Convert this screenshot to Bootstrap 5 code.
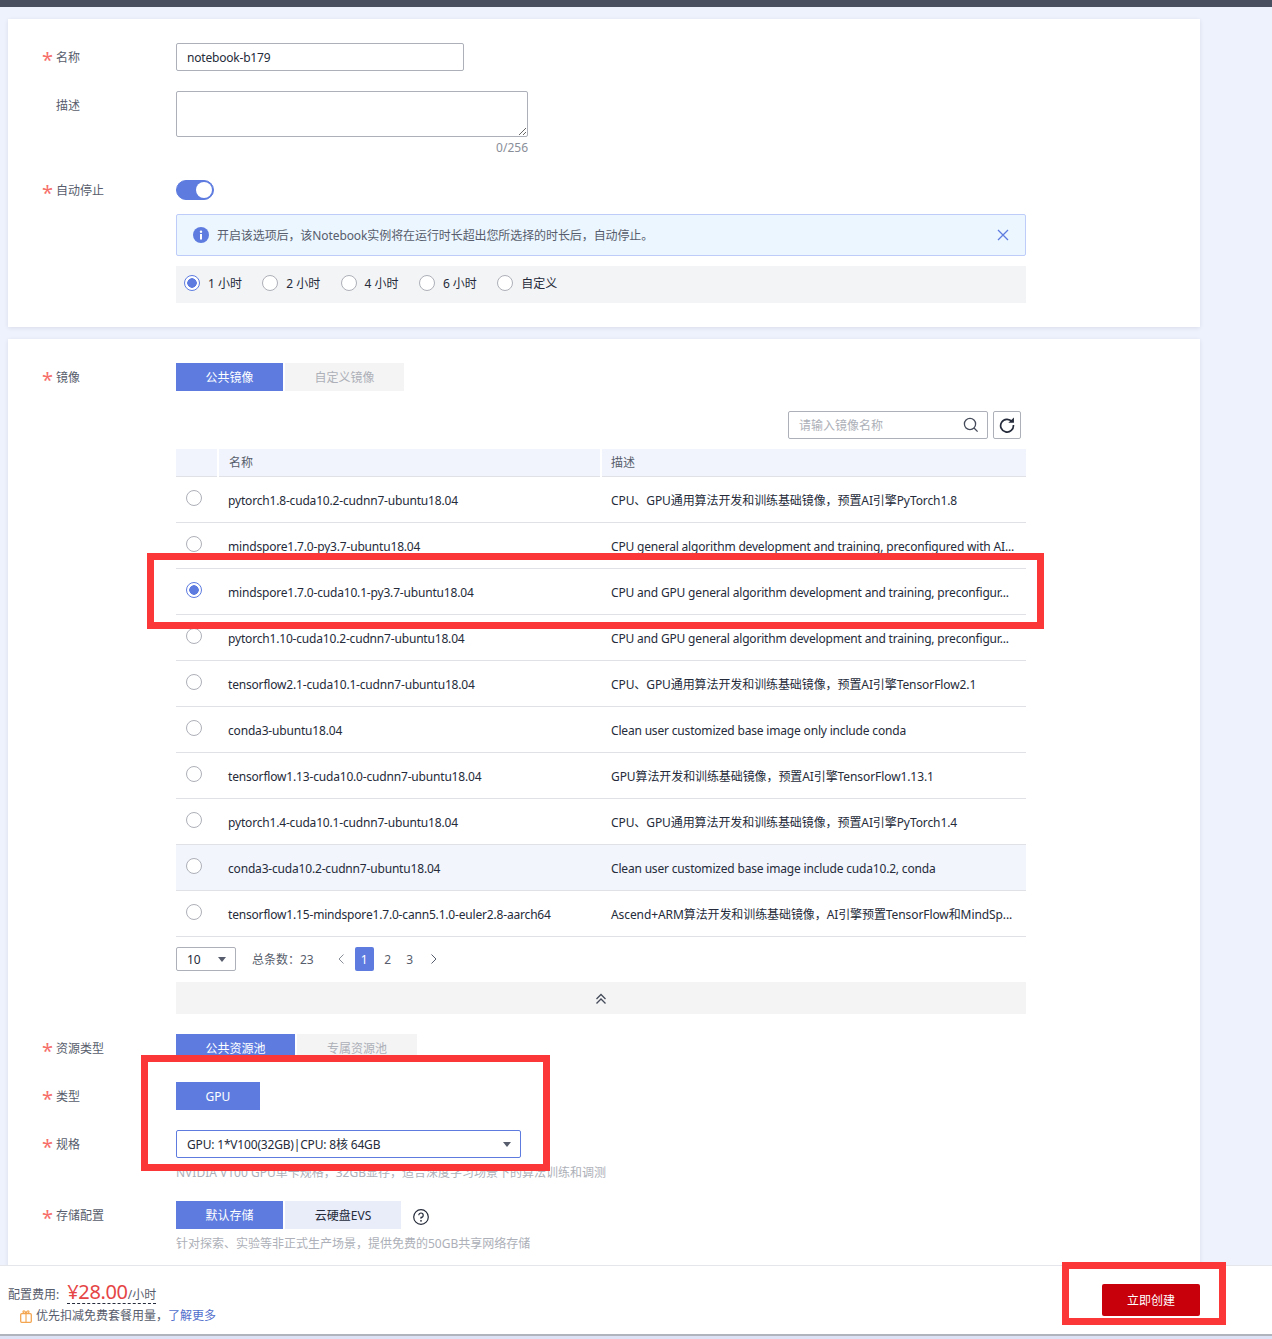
<!DOCTYPE html>
<html lang="zh">
<head>
<meta charset="utf-8">
<title>创建 Notebook</title>
<link href="https://cdn.jsdelivr.net/npm/bootstrap@5.3.0/dist/css/bootstrap.min.css" rel="stylesheet">
<style>
html,body{height:1339px;overflow:hidden}
body{background:#eef2fd;font-family:"Noto Sans","Noto Sans CJK SC",sans-serif;font-size:12px;color:#252b3a;line-height:18px}
.topstrip{height:7px;background:#494f5f}
.pane{background:#fff;margin-left:8px;width:1192px;box-shadow:0 1px 4px rgba(37,43,58,.1);border:0;border-radius:0}
.pane-a{margin-top:12px;height:308px;padding-top:24px}
.pane-b{margin-top:12px;height:1000px;padding-top:24px}
.frm-row{display:flex}
.frm-label{width:168px;height:28px;flex:none;padding-left:48px;padding-top:1px;line-height:28px;color:#575d6c;position:relative}
.frm-label.req::before{content:"*";position:absolute;left:34px;top:3px;color:#f66f6a;font-size:20px}
.frm-body{width:850px;flex:none}
.frm-input{width:288px;height:28px;padding:0 10px;font-size:12px;letter-spacing:-.2px;color:#252b3a;border:1px solid #adb0b8;border-radius:2px;font-family:inherit}
.frm-area{width:352px;height:46px;font-size:12px;border:1px solid #adb0b8;border-radius:2px;display:block}
.counter{width:352px;text-align:right;color:#8a8e99;line-height:20px;margin-top:1px}
.switch-row{margin-top:22px;margin-bottom:14px;line-height:20px}
.switch-row .frm-label{line-height:20px;height:20px}
.tog{width:38px;height:20px;border-radius:10px;background:#5e7ce0;border:1px solid #5e7ce0;display:flex;justify-content:flex-end;padding:1px}
.tog i{display:block;width:16px;height:16px;border-radius:50%;background:#fff}
.tip{height:42px;background:#ebf6ff;border:1px solid #beccfa;border-radius:2px;padding:0 16px;color:#575d6c;margin:0}
.tip .tip-x{margin-left:auto}
.nudge{padding-top:2px}
.lat{letter-spacing:-.18px}
.mix{letter-spacing:-.09px}
.radio-bar{height:37px;margin-top:10px;background:#f3f4f6;padding-left:8px;padding-bottom:2px;gap:19.3px}
.radio-bar .rd{margin-top:-2px}
.rd{display:block;width:16px;height:16px;border:1px solid #adb0b8;border-radius:50%;background:#fff;margin:0;flex:none}
.rd.on{border-color:#5e7ce0;background:radial-gradient(circle,#5e7ce0 0,#5e7ce0 4.5px,#fff 5px)}
.rd-item{display:flex;align-items:center;gap:8px;color:#252b3a;width:59px;white-space:nowrap}
.seg{height:28px;border-radius:0;border:0;font-size:12px;padding:1px 0 0;line-height:27px}
.seg-on,.seg-on:hover{background:#5e7ce0;color:#fff}
.seg-off,.seg-off:hover{background:#f4f4f4;color:#adb0b8}
.seg-soft,.seg-soft:hover{background:#e9edfa;color:#252b3a}
.w107{width:107px}.w119{width:119px}.w84{width:84px}.w116{width:116px}.w120{width:120px}
.ml2{margin-left:2px}
.search-row{height:28px;margin-top:20px;margin-bottom:10px;padding-right:5px;gap:5px}
.search-box{width:200px;height:28px;border:1px solid #adb0b8;border-radius:2px;padding:0 10px;color:#adb0b8}
.search-box svg{margin-left:auto;margin-right:-2px}
.refresh{width:28px;height:28px;border:1px solid #adb0b8;border-radius:2px;padding:0}
.img-table{table-layout:fixed;width:850px;margin:0;font-size:12px;--bs-table-bg:transparent}
.img-table th{height:27px;padding:0 10px;background:#f1f4fc;color:#575d6c;font-weight:400;border-bottom:1px solid #dfe1e6;border-left:2px solid #fff;line-height:27px;vertical-align:middle}
.img-table th:first-child{border-left:0}
.img-table th:last-child{padding-left:9px}
.img-table td{height:46px;padding:2px 10px 0;border-bottom:1px solid #dfe1e6;vertical-align:middle;color:#252b3a;white-space:nowrap;overflow:hidden}
.img-table td:first-child{overflow:visible}
.img-table td .rd{margin-top:-5px}
.img-table tr.hov td{background:#f2f5fc}
.pager-row{height:24px;margin-top:10px;margin-bottom:11px;color:#575d6c}
.page-size{width:60px;height:24px;border:1px solid #adb0b8;border-radius:2px;padding:0 9px 0 10px;color:#252b3a}
.caret{width:0;height:0;border-left:4px solid transparent;border-right:4px solid transparent;border-top:5px solid #575d6c;margin-left:auto}
.total{margin-left:16px;margin-right:13px}
.pg{margin:0;gap:0}
.pg .page-item .page-link{border:0;background:transparent;color:#575d6c;height:24px;padding:1px 0 0;line-height:24px;text-align:center;font-size:12px;width:22px;margin-left:0;border-radius:2px}
.pg .page-item.active .page-link{background:#5e7ce0;color:#fff;width:19px;margin-right:3px}
.pg .page-item.arr .page-link{display:flex;align-items:center;justify-content:center;width:28px;padding:0}
.pg .page-item.arr.nx .page-link{width:26px}
.collapse-bar{height:32px;background:#f4f4f4;padding-top:2px}
.row-gap{margin-top:20px}
.hint{color:#adb0b8;line-height:18px}
.hint-a{margin-top:6px}
.spec{width:345px;height:28px;border:1px solid #5e7ce0;border-radius:2px;padding:0 9px 0 10px;color:#252b3a}
.stor-row{margin-top:19px}
.help-ico{margin-left:12px;margin-top:4px}
.footbar{position:fixed;left:0;right:0;top:1265px;height:71px;background:#fff;border-top:1px solid #e4e6ec;border-bottom:2px solid #b0b4bd}
.foot-strip{position:fixed;left:0;right:0;top:1336px;height:3px;background:#dde3f4}
.fee-line{position:absolute;left:8px;top:13px;display:flex;align-items:baseline;color:#575d6c}
.fee-val{border-bottom:1px dashed #252b3a;margin-left:8px;line-height:26px;height:25px;color:#575d6c}
.fee-num{font-size:20px;letter-spacing:-.35px;color:#e54545}
.free-line{position:absolute;left:20px;top:41px;display:flex;align-items:center;color:#575d6c;gap:4px}
.free-line a{color:#526ecc;text-decoration:none}
.btn-make,.btn-make:hover{position:absolute;left:1102px;top:18px;width:98px;height:32px;background:#c7000b;color:#fff;border:0;border-radius:2px;font-size:12px;padding:2px 0 0}
.mark-box{position:fixed;border:7px solid #fc3737;pointer-events:none}
.mk1{left:147px;top:553px;width:897px;height:76px}
.mk2{left:141px;top:1055px;width:409px;height:116px}
.mk3{left:1062px;top:1262px;width:164px;height:63px}
</style>
</head>
<body>
<div class="topstrip"></div>

<div class="card pane pane-a">
  <div class="frm-row">
    <div class="frm-label req">名称</div>
    <div class="frm-body"><input class="frm-input" value="notebook-b179"></div>
  </div>
  <div class="frm-row row-gap">
    <div class="frm-label">描述</div>
    <div class="frm-body">
      <textarea class="frm-area"></textarea>
      <div class="counter">0/256</div>
    </div>
  </div>
  <div class="frm-row switch-row">
    <div class="frm-label req">自动停止</div>
    <div class="frm-body"><div class="tog"><i></i></div></div>
  </div>
  <div class="frm-row">
    <div class="frm-label"></div>
    <div class="frm-body">
      <div class="tip d-flex align-items-center gap-2">
        <svg width="16" height="16" viewBox="0 0 16 16"><circle cx="8" cy="8" r="8" fill="#5e7ce0"/><rect x="7" y="7" width="2" height="5.5" fill="#fff"/><circle cx="8" cy="4.7" r="1.2" fill="#fff"/></svg>
        <span class="nudge mix">开启该选项后，该Notebook实例将在运行时长超出您所选择的时长后，自动停止。</span>
        <svg class="tip-x" width="12" height="12" viewBox="0 0 12 12"><path d="M1 1l10 10M11 1L1 11" stroke="#5e7ce0" stroke-width="1.3" fill="none"/></svg>
      </div>
      <div class="radio-bar d-flex align-items-center">
        <label class="rd-item"><span class="rd on"></span>1 小时</label>
        <label class="rd-item"><span class="rd"></span>2 小时</label>
        <label class="rd-item"><span class="rd"></span>4 小时</label>
        <label class="rd-item"><span class="rd"></span>6 小时</label>
        <label class="rd-item"><span class="rd"></span>自定义</label>
      </div>
    </div>
  </div>
</div>

<div class="card pane pane-b">
  <div class="frm-row">
    <div class="frm-label req">镜像</div>
    <div class="frm-body">
      <div class="d-flex">
        <button class="btn seg seg-on w107">公共镜像</button>
        <button class="btn seg seg-off w119 ml2">自定义镜像</button>
      </div>
      <div class="search-row d-flex justify-content-end">
        <div class="search-box d-flex align-items-center"><span class="nudge">请输入镜像名称</span>
          <svg width="16" height="16" viewBox="0 0 16 16" fill="none"><circle cx="7" cy="7" r="5.6" stroke="#454b5a" stroke-width="1.3"/><path d="M11 11l3.6 3.6" stroke="#454b5a" stroke-width="1.3"/></svg>
        </div>
        <button class="btn refresh d-flex align-items-center justify-content-center">
          <svg width="16" height="16" viewBox="0 0 18 18" fill="none"><path d="M14.6 5.2A7.2 7.2 0 1 0 16.2 9" stroke="#252b3a" stroke-width="1.9"/><path d="M10.5 6.4h6.3V.5z" fill="#252b3a"/></svg>
        </button>
      </div>
      <table class="table img-table">
        <colgroup><col class="c1"><col class="c2"><col class="c3"></colgroup>
        <thead><tr><th style="width:42px"></th><th style="width:383px">名称</th><th>描述</th></tr></thead>
        <tbody>
          <tr><td><span class="rd"></span></td><td class="lat">pytorch1.8-cuda10.2-cudnn7-ubuntu18.04</td><td class="mix">CPU、GPU通用算法开发和训练基础镜像，预置AI引擎PyTorch1.8</td></tr>
          <tr><td><span class="rd"></span></td><td class="lat">mindspore1.7.0-py3.7-ubuntu18.04</td><td class="lat">CPU general algorithm development and training, preconfigured with AI...</td></tr>
          <tr><td><span class="rd on"></span></td><td class="lat">mindspore1.7.0-cuda10.1-py3.7-ubuntu18.04</td><td class="lat">CPU and GPU general algorithm development and training, preconfigur...</td></tr>
          <tr><td><span class="rd"></span></td><td class="lat">pytorch1.10-cuda10.2-cudnn7-ubuntu18.04</td><td class="lat">CPU and GPU general algorithm development and training, preconfigur...</td></tr>
          <tr><td><span class="rd"></span></td><td class="lat">tensorflow2.1-cuda10.1-cudnn7-ubuntu18.04</td><td class="mix">CPU、GPU通用算法开发和训练基础镜像，预置AI引擎TensorFlow2.1</td></tr>
          <tr><td><span class="rd"></span></td><td class="lat">conda3-ubuntu18.04</td><td class="lat">Clean user customized base image only include conda</td></tr>
          <tr><td><span class="rd"></span></td><td class="lat">tensorflow1.13-cuda10.0-cudnn7-ubuntu18.04</td><td class="mix">GPU算法开发和训练基础镜像，预置AI引擎TensorFlow1.13.1</td></tr>
          <tr><td><span class="rd"></span></td><td class="lat">pytorch1.4-cuda10.1-cudnn7-ubuntu18.04</td><td class="mix">CPU、GPU通用算法开发和训练基础镜像，预置AI引擎PyTorch1.4</td></tr>
          <tr class="hov"><td><span class="rd"></span></td><td class="lat">conda3-cuda10.2-cudnn7-ubuntu18.04</td><td class="lat">Clean user customized base image include cuda10.2, conda</td></tr>
          <tr><td><span class="rd"></span></td><td class="lat">tensorflow1.15-mindspore1.7.0-cann5.1.0-euler2.8-aarch64</td><td class="mix">Ascend+ARM算法开发和训练基础镜像，AI引擎预置TensorFlow和MindSp...</td></tr>
        </tbody>
      </table>
      <div class="pager-row d-flex align-items-center">
        <div class="page-size d-flex align-items-center"><span class="nudge">10</span><span class="caret"></span></div>
        <span class="total nudge">总条数：23</span>
        <ul class="pagination pg">
          <li class="page-item arr"><a class="page-link" href="#"><svg width="8" height="12" viewBox="0 0 8 12" fill="none"><path d="M6.5 1.5L2 6l4.5 4.5" stroke="#8a8e99"/></svg></a></li>
          <li class="page-item active"><a class="page-link" href="#">1</a></li>
          <li class="page-item"><a class="page-link" href="#">2</a></li>
          <li class="page-item"><a class="page-link" href="#">3</a></li>
          <li class="page-item arr nx"><a class="page-link" href="#"><svg width="8" height="12" viewBox="0 0 8 12" fill="none"><path d="M1.5 1.5L6 6l-4.5 4.5" stroke="#575d6c"/></svg></a></li>
        </ul>
      </div>
      <div class="collapse-bar d-flex align-items-center justify-content-center">
        <svg width="12" height="12" viewBox="0 0 12 12" fill="none"><path d="M1.5 6L6 1.5 10.5 6M1.5 10.5L6 6l4.5 4.5" stroke="#454b5a" stroke-width="1.3"/></svg>
      </div>
    </div>
  </div>
  <div class="frm-row row-gap">
    <div class="frm-label req">资源类型</div>
    <div class="frm-body d-flex">
      <button class="btn seg seg-on w119">公共资源池</button>
      <button class="btn seg seg-off w120 ml2">专属资源池</button>
    </div>
  </div>
  <div class="frm-row row-gap">
    <div class="frm-label req">类型</div>
    <div class="frm-body"><button class="btn seg seg-on w84">GPU</button></div>
  </div>
  <div class="frm-row row-gap">
    <div class="frm-label req">规格</div>
    <div class="frm-body">
      <div class="spec d-flex align-items-center"><span class="lat nudge">GPU: 1*V100(32GB)|CPU: 8核 64GB</span><span class="caret"></span></div>
      <div class="hint hint-a">NVIDIA V100 GPU单卡规格，32GB显存，适合深度学习场景下的算法训练和调测</div>
    </div>
  </div>
  <div class="frm-row stor-row">
    <div class="frm-label req">存储配置</div>
    <div class="frm-body">
      <div class="d-flex align-items-center">
        <button class="btn seg seg-on w107">默认存储</button>
        <button class="btn seg seg-soft w116 ml2">云硬盘EVS</button>
        <svg class="help-ico" width="16" height="16" viewBox="0 0 16 16" fill="none"><circle cx="8" cy="8" r="7.3" stroke="#252b3a" stroke-width="1.2"/><path d="M5.8 6.2A2.2 2.2 0 1 1 8 8.4v1.4" stroke="#252b3a" stroke-width="1.2"/><circle cx="8" cy="11.8" r=".9" fill="#252b3a"/></svg>
      </div>
      <div class="hint hint-a">针对探索、实验等非正式生产场景，提供免费的50GB共享网络存储</div>
    </div>
  </div>
</div>

<div class="footbar">
  <div class="fee-line"><span>配置费用:</span><span class="fee-val"><span class="fee-num">¥28.00</span>/小时</span></div>
  <div class="free-line">
    <svg width="12" height="13" viewBox="0 0 12 13" fill="none"><rect x=".7" y="3.7" width="10.6" height="8.6" rx="1" stroke="#f3a54f" stroke-width="1.3"/><path d="M6 3.5v9M6 3.5C4.5 3.5 2.8 2.8 3 1.5 3.3.3 5.5.8 6 3.5c.5-2.7 2.7-3.2 3-2 .2 1.3-1.5 2-3 2z" stroke="#f3a54f" stroke-width="1.1"/></svg>
    <span>优先扣减免费套餐用量，<a href="#">了解更多</a></span>
  </div>
  <button class="btn btn-make">立即创建</button>
</div>
<div class="foot-strip"></div>

<div class="mark-box mk1"></div>
<div class="mark-box mk2"></div>
<div class="mark-box mk3"></div>
<script src="https://cdn.jsdelivr.net/npm/bootstrap@5.3.0/dist/js/bootstrap.bundle.min.js"></script>
</body>
</html>
